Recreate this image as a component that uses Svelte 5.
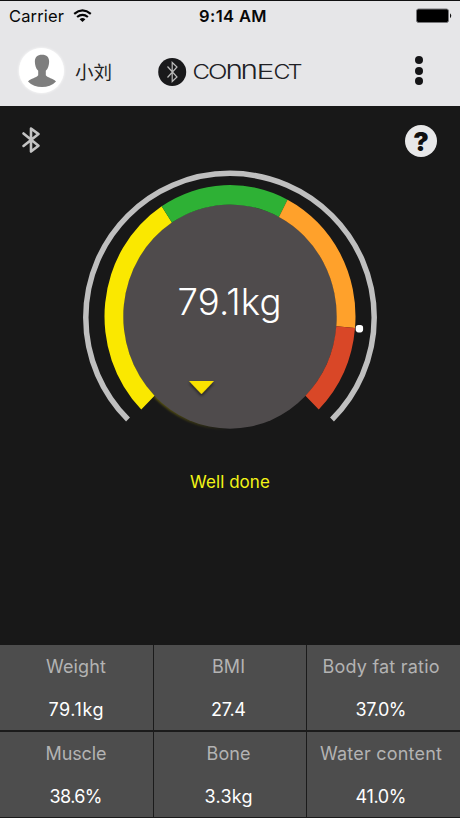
<script>
  const cx = 230;
  const cy = 316.5;

  function point(deg, rx, ry) {
    const a = (deg * Math.PI) / 180;
    return `${(cx + rx * Math.sin(a)).toFixed(2)} ${(cy - ry * Math.cos(a)).toFixed(2)}`;
  }

  function band(from, to) {
    return `M${point(from, 125.5, 131.5)}A125.5 131.5 0 0 1 ${point(to, 125.5, 131.5)}L${point(to, 106.7, 112)}A106.7 112 0 0 0 ${point(from, 106.7, 112)}Z`;
  }

  const bands = [
    { from: -135, to: -33, color: '#fae800' },
    { from: -33, to: 27.3, color: '#2eb135' },
    { from: 27.3, to: 95, color: '#ffa12b' },
    { from: 95, to: 135, color: '#d94727' }
  ];

  const logo = [
    { t: 'C', x: 192.5, w: 17.5 },
    { t: 'O', x: 208, w: 19.5 },
    { t: 'n', x: 225.5, w: 17.5 },
    { t: 'n', x: 240.5, w: 17.5 },
    { t: 'E', x: 256.5, w: 18 },
    { t: 'C', x: 273.5, w: 17 },
    { t: 'T', x: 287.5, w: 15 }
  ];

  const cells = [
    { label: 'Weight', value: '79.1kg', lw: 60, vw: 55, x: 75 },
    { label: 'BMI', value: '27.4', lw: 33, vw: 35, x: 73.5 },
    { label: 'Body fat ratio', value: '37.0%', lw: 117, vw: 51, x: 72 },
    { label: 'Muscle', value: '38.6%', lw: 61, vw: 53, x: 75 },
    { label: 'Bone', value: '3.3kg', lw: 44, vw: 48, x: 73.5 },
    { label: 'Water content', value: '41.0%', lw: 122, vw: 51, x: 72 }
  ];
</script>

<div class="app">
  <header>
    <div class="status">
      <div class="carrier">
        <span>Carrier</span>
        <svg width="19" height="14" viewBox="0 0 19 14" fill="none" stroke="#050505" stroke-width="2.2">
          <path d="M1.2 4.8Q9.5-2 17.8 4.8" />
          <path d="M4.1 8Q9.5 3.7 14.9 8" />
          <path d="M9.5 13 6.6 10.2Q9.5 7.9 12.4 10.2Z" fill="#050505" stroke="none" />
        </svg>
      </div>
      <b>9:14 AM</b>
      <svg class="battery" width="36" height="16" viewBox="0 0 36 16">
        <rect x=".5" y="1" width="32" height="13.5" rx="2" fill="#000" stroke="#77777a" />
        <path d="M34 5.2Q36.5 7.7 34 10.2Z" fill="#111" />
      </svg>
    </div>
    <div class="nav">
      <div class="avatar">
        <svg width="30" height="34" viewBox="0 0 30 34" fill="#7e7e7e">
          <path d="M15 .8C10 .8 7.600 3.700 7.900 8.200c.2 3 .9 6.200 3.300 8.600v4.400C9 24 4.200 24 1 27.400 8 34.800 22 34.800 29 27.400 25.800 24 21 24 18.800 21.200v-4.400c2.400-2.400 3.100-5.600 3.300-8.600C22.400 3.700 20 .8 15 .8Z" />
        </svg>
      </div>
      <span class="user">小刘</span>
      <svg class="brand" width="148" height="48" viewBox="157 48 148 48">
        <circle cx="172.200" cy="72" r="14" fill="#19191b" />
        <path d="M167.500 66.500 177 77l-4.800 4.500V62.500L177 67l-9.500 10.500" fill="none" stroke="#bbb" stroke-width="1.200" />
        <g class="wordmark">
          {#each logo as l}
            <text x={l.x} y="79.300" font-size={l.t === 'n' ? 26 : 20} textLength={l.w} lengthAdjust="spacingAndGlyphs">{l.t}</text>
          {/each}
        </g>
      </svg>
      <div class="more"><i></i><i></i><i></i></div>
    </div>
  </header>

  <main>
    <div class="tools">
      <svg class="bt" width="20" height="28" viewBox="0 0 20 28" fill="none" stroke="#c4c4c4" stroke-width="2.600" stroke-linecap="round" stroke-linejoin="round">
        <path d="M2.500 7.500 17.500 19.700 10 25.500V2.500L17.500 8.100 2.500 19.900" />
      </svg>
      <div class="help">?</div>
    </div>
    <svg class="gauge" width="300" height="270" viewBox="80 166 300 270">
      <defs>
        <linearGradient id="glow" x1="0" x2="1">
          <stop offset="0" stop-color="#d8c900" stop-opacity=".4" />
          <stop offset="1" stop-color="#d8c900" stop-opacity="0" />
        </linearGradient>
        <filter id="soft"><feGaussianBlur stdDeviation="1.200" /></filter>
        <filter id="shadow" x="-50%" y="-50%" width="200%" height="200%">
          <feDropShadow dx="0" dy="2" stdDeviation="1.500" flood-color="#000" flood-opacity=".6" />
        </filter>
      </defs>
      <path d="M128 419.500A144.200 144.200 0 1 1 332 419.500" fill="none" stroke="#bfbfbf" stroke-width="5.500" />
      <path d="M155 396Q185 427 228 428.500" fill="none" stroke="url(#glow)" stroke-width="3" filter="url(#soft)" />
      <ellipse {cx} {cy} rx="107" ry="112.200" fill="#4f4b4c" />
      {#each bands as b}
        <path d={band(b.from, b.to)} fill={b.color} />
      {/each}
      <rect x="355.700" y="325" width="7.400" height="7.400" rx="2.800" fill="#fff" />
      <path d="M189 381H214L201.500 394Z" fill="#fae100" filter="url(#shadow)" />
      <text x="177.500" y="315" font-size="36.500" font-weight="300" textLength="104" fill="#fff">79.1kg</text>
    </svg>
    <p>Well done</p>
  </main>

  <section>
    {#each cells as c}
      <div class="cell">
        <svg width="150" height="84" viewBox="0 0 150 84" text-anchor="middle">
          <text class="label" x={c.x} y="27.700" textLength={c.lw}>{c.label}</text>
          <text class="value" x={c.x} y="70.700" textLength={c.vw}>{c.value}</text>
        </svg>
      </div>
    {/each}
  </section>
</div>

<style>
  :global(body) { margin: 0; background: #181818; }
  .app {
    width: 460px;
    height: 818px;
    box-sizing: border-box;
    display: flex;
    flex-direction: column;
    background: #181818;
    border-top: 1px solid #111;
    font-family: Inter, Roboto, "Noto Sans CJK SC", sans-serif;
    overflow: hidden;
  }
  svg { display: block; flex: none; }
  header { height: 105px; background: #e6e6e8; flex: none; }
  .status {
    display: grid;
    grid-template-columns: 1fr auto 1fr;
    align-items: center;
    height: 30px;
    padding: 0 8px 0 9px;
    color: #080808;
    font-size: 16.500px;
  }
  .carrier { display: flex; align-items: center; gap: 9px; letter-spacing: .15px; }
  .status b { font-weight: 600; letter-spacing: .4px; margin-left: 5px; }
  .battery { justify-self: end; }
  .nav { display: flex; align-items: center; height: 79px; padding: 0 37.500px 0 19px; box-sizing: border-box; }
  .avatar {
    display: flex;
    align-items: center;
    justify-content: center;
    width: 45px;
    height: 45px;
    border-radius: 50%;
    background: #fff;
    box-shadow: 0 0 3px #fff;
  }
  .user { width: 82px; margin-left: 11px; font: 18.500px/30px "Noto Sans CJK SC", sans-serif; color: #222; }
  .brand { margin-top: 3px; }
  .wordmark { font-family: Inter, sans-serif; font-weight: 300; fill: #202024; }
  .more { display: flex; flex-direction: column; gap: 2.500px; margin-left: auto; }
  .more i { width: 8px; height: 8px; border-radius: 50%; background: #151517; }
  main { flex: 1; display: flex; flex-direction: column; align-items: center; }
  .tools { width: 100%; height: 60px; box-sizing: border-box; display: flex; justify-content: space-between; align-items: flex-start; padding: 19px 23px 0 21px; }
  .bt { margin-top: 1px; }
  .help { width: 32px; height: 32px; border-radius: 50%; background: #e8e8e9; color: #101010; text-align: center; font: 900 26px/33px Inter, sans-serif; }
  p { margin: 35px 0 0; font-size: 17px; line-height: 22px; letter-spacing: .05px; color: #f3f516; }
  section {
    flex: none;
    display: grid;
    grid-template-columns: 152.500px 151.500px 153px;
    grid-template-rows: 85px 85.500px;
    gap: 1.500px;
    background: #1b1b1b;
    padding: 0 0 1px;
  }
  .cell { display: flex; justify-content: center; background: #4d4d4d; overflow: hidden; }
  .label { font-size: 18px; fill: #b3b3b3; }
  .value { font-size: 18px; fill: #fff; }
</style>
